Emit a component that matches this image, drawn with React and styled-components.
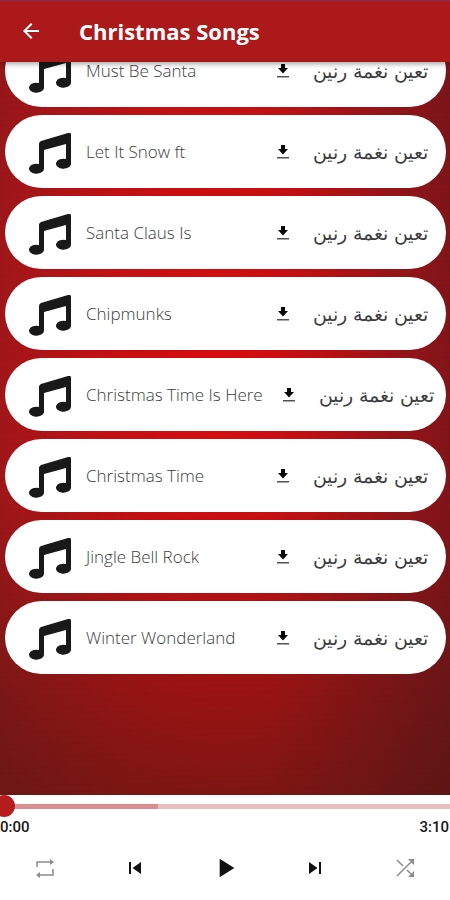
import React, { useLayoutEffect, useRef, useState } from 'react';
import styled, { createGlobalStyle } from 'styled-components';
import { MdArrowBack, MdPlayArrow, MdSkipNext, MdSkipPrevious } from 'react-icons/md';

const songs = [
	'Must Be Santa',
	'Let It Snow ft',
	'Santa Claus Is',
	'Chipmunks',
	'Christmas Time Is Here',
	'Christmas Time',
	'Jingle Bell Rock',
	'Winter Wonderland',
];

const GlobalStyle = createGlobalStyle`
	* {
		box-sizing: border-box;
	}

	body {
		margin: 0;
		font-family: 'Open Sans', 'DejaVu Sans', sans-serif;
	}

	button {
		margin: 0;
		padding: 0;
		border: 0;
		background: none;
		font: inherit;
		color: inherit;
		cursor: pointer;
	}
`;

// === Page ===

const Page = styled.div`
	height: 100vh;
	display: flex;
	flex-direction: column;
	overflow: hidden;
	background:
		repeating-linear-gradient(179deg, rgba(0, 0, 0, 0.03) 0 1px, transparent 1px 5px, rgba(0, 0, 0, 0.02) 5px 7px, transparent 7px 12px),
		linear-gradient(90deg, transparent 60%, rgba(60, 14, 22, 0.25) 100%),
		linear-gradient(180deg, transparent 55%, rgba(70, 24, 14, 0.5) 92%),
		radial-gradient(ellipse 64% 75% at 48% 42%, #da0c0f 0%, #c41013 40%, #a01619 75%, #88171b 100%);
`;

const Header = styled.header`
	position: relative;
	z-index: 1;
	flex: none;
	display: flex;
	align-items: center;
	gap: 36px;
	height: 62px;
	padding: 0 19px 2px;
	border-top: 2px solid #982439;
	background: #ac191b;
	color: #fff;
	box-shadow: 0 2px 5px rgba(0, 0, 0, 0.35);
`;

const BackButton = styled.button`
	display: flex;
	font-size: 24px;
`;

const Title = styled.h1`
	margin: 0;
	font-size: 22px;
	line-height: 30px;
	font-weight: 700;
`;

// === Song list ===

const List = styled.ul`
	flex: 1;
	min-height: 0;
	display: flex;
	flex-direction: column;
	gap: 8px;
	margin: 0;
	padding: 0 4px 121px 5px;
	overflow-y: auto;
	scrollbar-width: none;
	list-style: none;
`;

const Row = styled.li`
	flex: none;
	display: flex;
	align-items: center;
	height: 73px;
	padding: 0 12px 0 24px;
	border-radius: 37px;
	background: #fff;
	color: #3c3c3c;
	white-space: nowrap;
`;

const Note = styled.svg`
	flex: none;
	width: 42px;
	height: 42px;
	margin-top: 4px;
	fill: #191919;
`;

const SongName = styled.span`
	flex: none;
	min-width: 171px;
	margin-left: 15px;
	font-size: 17px;
	line-height: 24px;
	font-weight: 300;
`;

const DownloadButton = styled.button`
	display: flex;
	margin: 0 24px 0 20px;
	color: #080808;
`;

const RingtoneButton = styled.button`
	font-family: 'DejaVu Sans', sans-serif;
	font-size: 19px;
	line-height: 24px;
	font-weight: 200;
`;

// === Player ===

const Player = styled.footer`
	flex: none;
	overflow: hidden;
	height: 105px;
	background: #fff;
	color: #171717;
`;

const Seek = styled.input`
	display: block;
	appearance: none;
	width: calc(100% + 14px);
	height: 22px;
	margin: 0 -7px;
	background: none;

	&::-webkit-slider-runnable-track {
		height: 5px;
		background: linear-gradient(90deg, #d98e90 0 165px, #e9bfc2 165px);
	}

	&::-webkit-slider-thumb {
		appearance: none;
		width: 22px;
		height: 22px;
		margin-top: -9px;
		border-radius: 50%;
		background: #b71c1f;
	}
`;

const Times = styled.div`
	display: flex;
	justify-content: space-between;
	padding-right: 1px;
	font-family: Roboto, sans-serif;
	font-size: 15px;
	line-height: 20px;
	font-weight: 500;
`;

const Controls = styled.div`
	display: grid;
	grid-template-columns: repeat(5, 1fr);
	align-items: center;
	height: 62px;
`;

const ControlButton = styled.button`
	display: flex;
	justify-content: center;
	font-size: ${({ $size }) => $size || 24}px;
	color: ${({ $muted }) => ($muted ? '#8c8c8c' : '#111')};
`;

const NoteIcon = () => (
	<Note viewBox="0 0 42 42" aria-hidden="true">
		<path d="M10 11Q10 9 12 8L39 0Q42-1 42 2V31A7.500 5 0 1 1 37 26V11L15 17V36A7.500 5 0 1 1 10 31Z" />
	</Note>
);

const DownloadIcon = () => (
	<svg width="12" height="14" viewBox="0 0 12 14" fill="currentColor" aria-hidden="true">
		<path d="M4 0h4v4h3L6 9.500 1 4h3z" />
		<path d="M0 12h12v1.500H0z" fillOpacity="0.7" />
	</svg>
);

const RepeatIcon = () => (
	<svg width="20" height="20" viewBox="0 0 20 20" fill="none" stroke="currentColor" strokeWidth="1.500" aria-hidden="true">
		<path d="M2 9V4h15M18 11v6H3" />
		<path d="M15 1l4 3-4 3zM5 14l-4 3 4 3z" fill="currentColor" stroke="none" />
	</svg>
);

const ShuffleIcon = () => (
	<svg width="18" height="18" viewBox="0 0 18 18" fill="none" stroke="currentColor" strokeWidth="1.500" aria-hidden="true">
		<path d="M1 17L15 3M1 1l6 6M11 11l4 4" />
		<path d="M12 0h6v6zM18 12v6h-6z" fill="currentColor" stroke="none" />
	</svg>
);

const SongRow = ({ name }) => (
	<Row>
		<NoteIcon />
		<SongName>{name}</SongName>
		<DownloadButton type="button" aria-label={`Download ${name}`}>
			<DownloadIcon />
		</DownloadButton>
		<RingtoneButton type="button" dir="rtl" lang="ar">تعين نغمة رنين</RingtoneButton>
	</Row>
);

const App = () => {
	const listRef = useRef(null);
	const [position, setPosition] = useState(0);

	// open the list at its last song
	useLayoutEffect(() => {
		listRef.current.scrollTop = listRef.current.scrollHeight;
	}, []);

	return (
		<>
			<GlobalStyle />
			<Page>
				<Header>
					<BackButton type="button" aria-label="Back"><MdArrowBack /></BackButton>
					<Title>Christmas Songs</Title>
				</Header>
				<List ref={listRef}>
					{songs.map((name) => <SongRow key={name} name={name} />)}
				</List>
				<Player>
					<Seek
						type="range"
						aria-label="Position"
						min="0"
						max="190"
						value={position}
						onChange={(e) => setPosition(Number(e.target.value))}
					/>
					<Times>
						<span>0:00</span>
						<span>3:10</span>
					</Times>
					<Controls>
						<ControlButton type="button" aria-label="Repeat" $muted><RepeatIcon /></ControlButton>
						<ControlButton type="button" aria-label="Previous"><MdSkipPrevious /></ControlButton>
						<ControlButton type="button" aria-label="Play" $size={32}><MdPlayArrow /></ControlButton>
						<ControlButton type="button" aria-label="Next"><MdSkipNext /></ControlButton>
						<ControlButton type="button" aria-label="Shuffle" $muted><ShuffleIcon /></ControlButton>
					</Controls>
				</Player>
			</Page>
		</>
	);
};

export default App;
